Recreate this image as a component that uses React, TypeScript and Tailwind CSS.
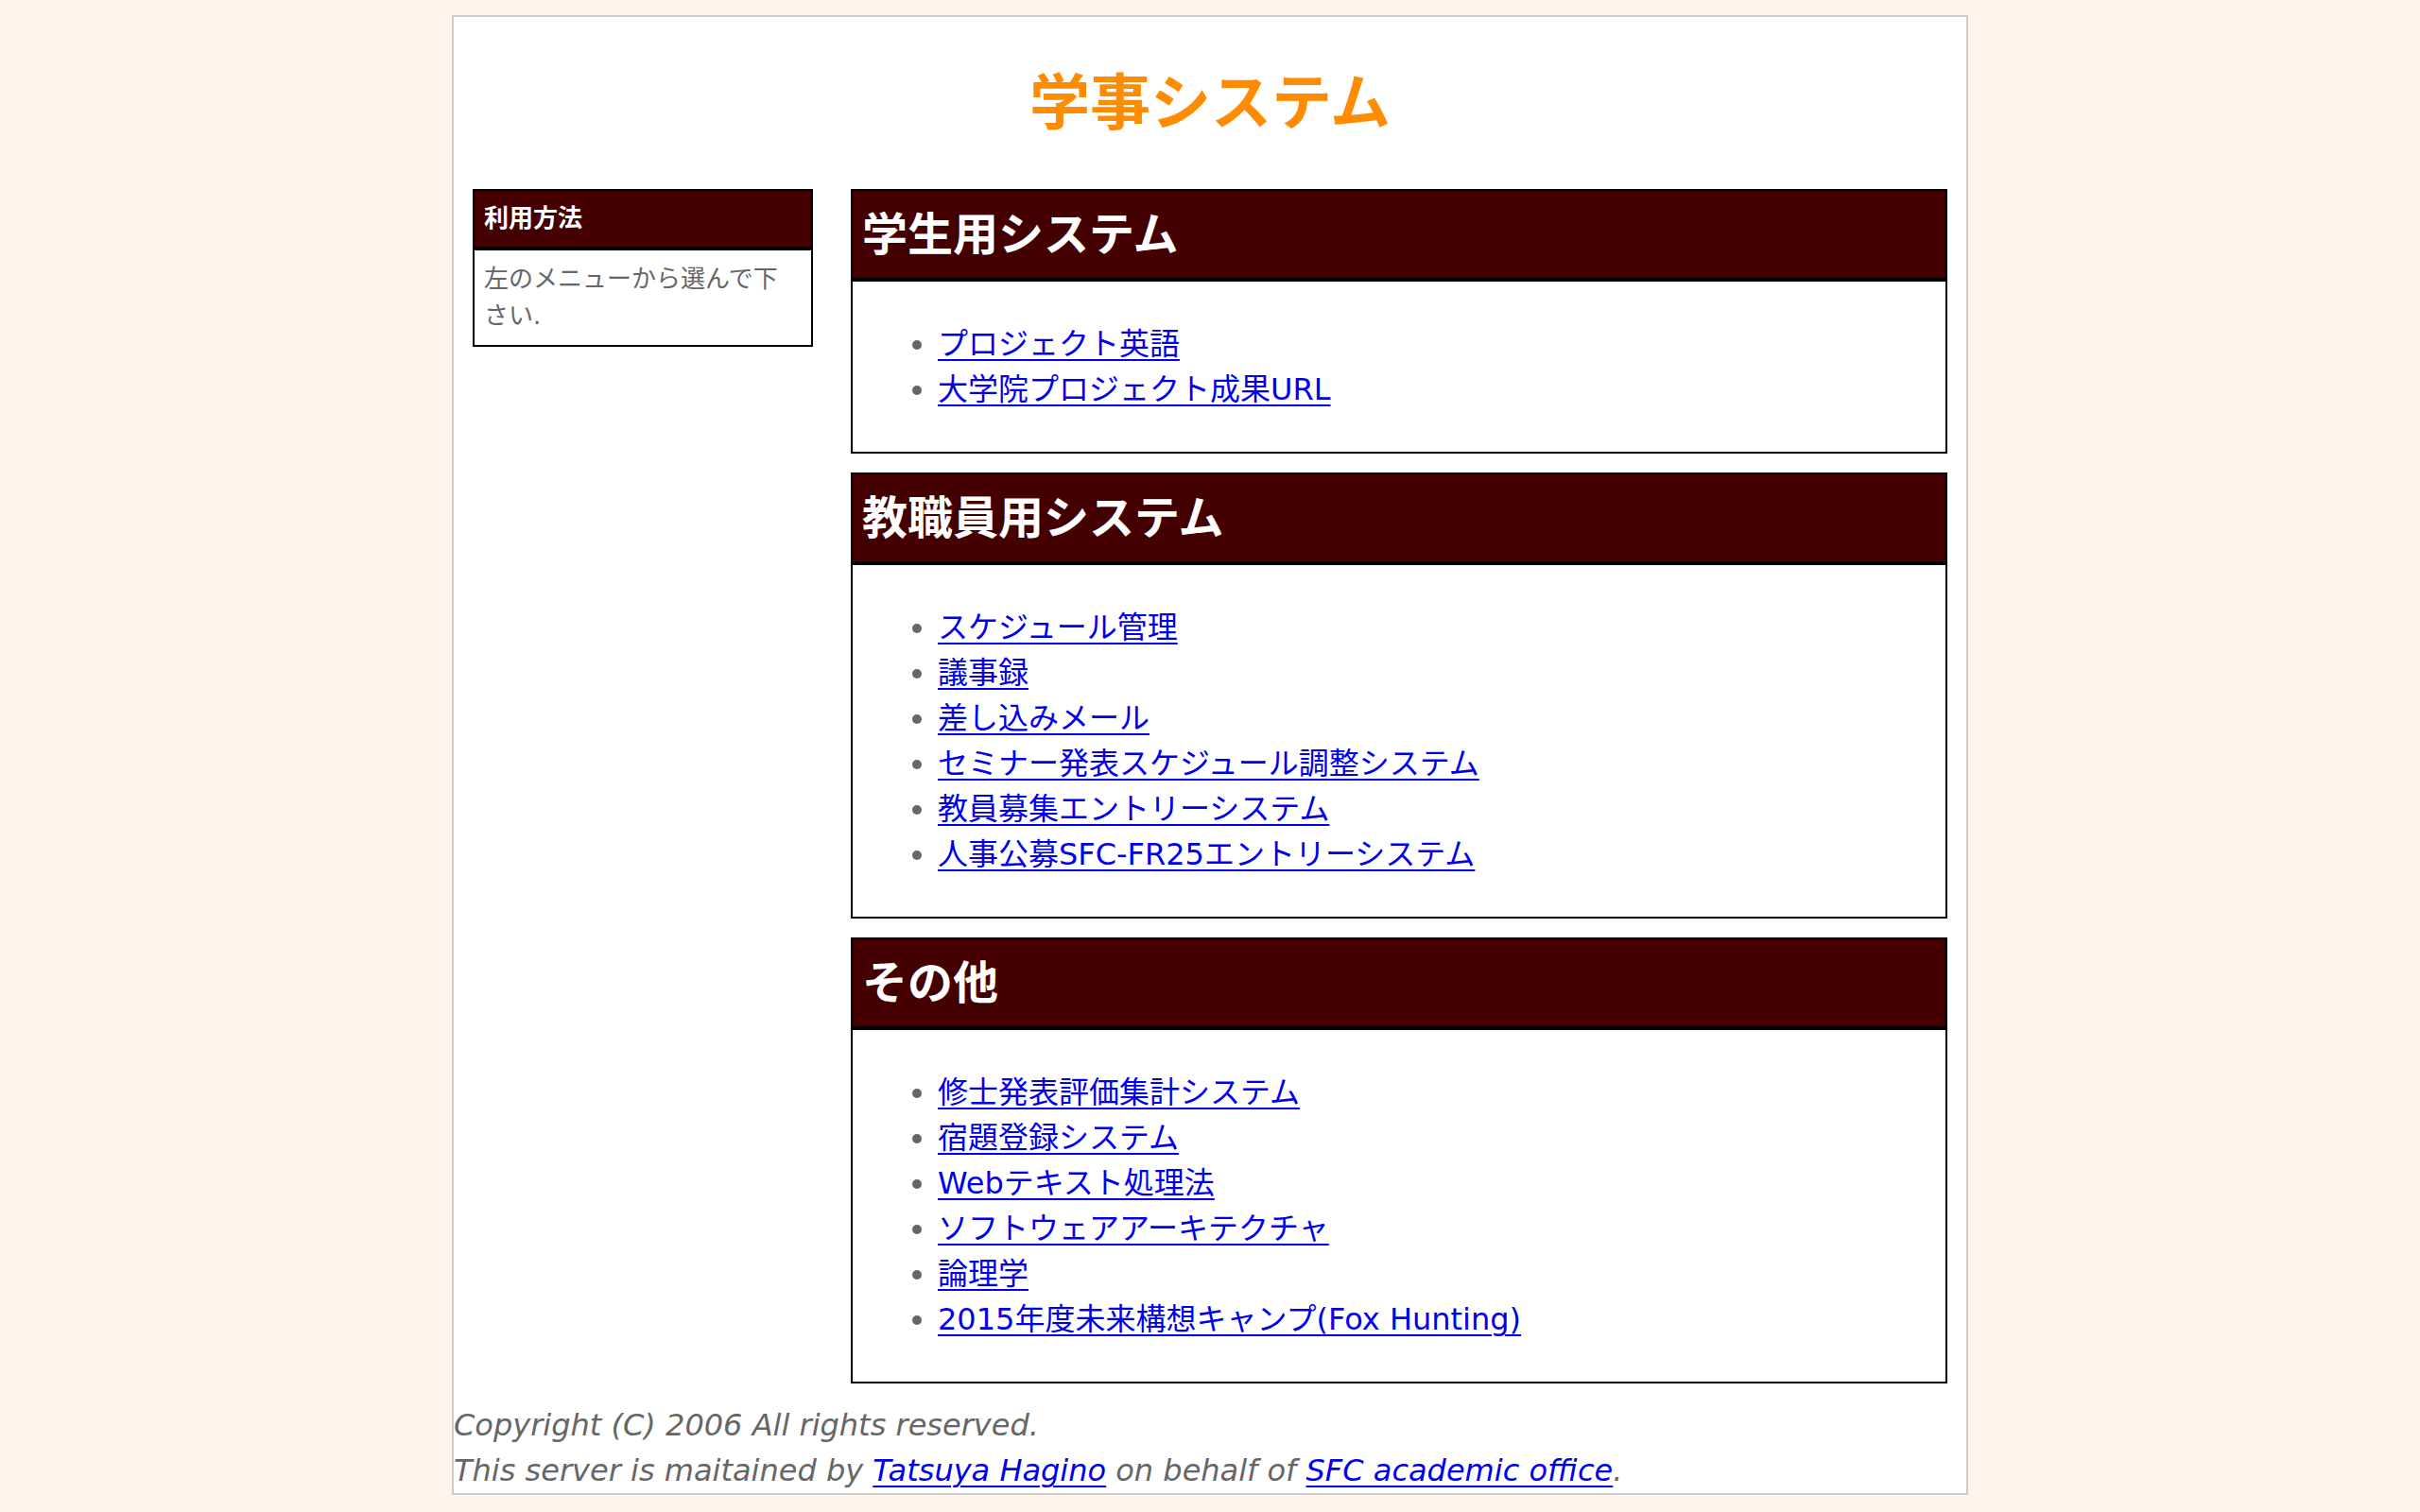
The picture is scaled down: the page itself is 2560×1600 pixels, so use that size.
import React from "react";

type Section = {
  title: string;
  links: string[];
};

const sections: Section[] = [
  {
    title: "学生用システム",
    links: ["プロジェクト英語", "大学院プロジェクト成果URL"],
  },
  {
    title: "教職員用システム",
    links: [
      "スケジュール管理",
      "議事録",
      "差し込みメール",
      "セミナー発表スケジュール調整システム",
      "教員募集エントリーシステム",
      "人事公募SFC-FR25エントリーシステム",
    ],
  },
  {
    title: "その他",
    links: [
      "修士発表評価集計システム",
      "宿題登録システム",
      "Webテキスト処理法",
      "ソフトウェアアーキテクチャ",
      "論理学",
      "2015年度未来構想キャンプ(Fox Hunting)",
    ],
  },
];

function SystemBox({ section }: { section: Section }) {
  return (
    <div className="mb-5">
      <h2 className="border-2 border-black bg-[#440000] px-[10px] py-[10px] text-[48px] leading-[72px] font-bold text-white">
        {section.title}
      </h2>
      <div className="border-2 border-black px-[10px] py-[10px]">
        <ul className="my-8 list-disc pl-20 text-[32px] leading-[48px] text-[#666666]">
          {section.links.map((link) => (
            <li key={link}>
              <a
                href="#"
                className="text-[#0000ee] underline decoration-2 underline-offset-[5px]"
              >
                {link}
              </a>
            </li>
          ))}
        </ul>
      </div>
    </div>
  );
}

export default function App() {
  return (
    <div className="min-h-screen bg-[#fff5ec] py-4 font-['DejaVu_Sans','Noto_Sans_CJK_JP',sans-serif]">
      <div className="mx-auto w-[1604px] border-2 border-[#cccccc] bg-white">
        <h1 className="my-[43px] text-center text-[64px] leading-[96px] font-bold text-[#ff8c00]">
          学事システム
        </h1>

        <div className="flex items-start">
          {/* sidebar */}
          <div className="ml-5 w-[360px] shrink-0">
            <div className="border-2 border-black bg-[#440000] p-[10px] text-[26px] leading-[39px] font-bold text-white">
              利用方法
            </div>
            <div className="border-2 border-black px-[10px] py-[11px] text-[26px] leading-[39px] text-[#666666]">
              左のメニューから選んで下さい.
            </div>
          </div>

          {/* main column */}
          <div className="ml-10 mr-5 w-[1160px] shrink-0">
            {sections.map((s) => (
              <SystemBox key={s.title} section={s} />
            ))}
          </div>
        </div>

        <div className="text-[32px] leading-[48px] italic text-[#666666]">
          Copyright (C) 2006 All rights reserved.
          <br />
          This server is maitained by{" "}
          <a href="#" className="text-[#0000ee] underline decoration-2 underline-offset-[5px]">
            Tatsuya Hagino
          </a>{" "}
          on behalf of{" "}
          <a href="#" className="text-[#0000ee] underline decoration-2 underline-offset-[5px]">
            SFC academic office
          </a>
          .
        </div>
      </div>
    </div>
  );
}
